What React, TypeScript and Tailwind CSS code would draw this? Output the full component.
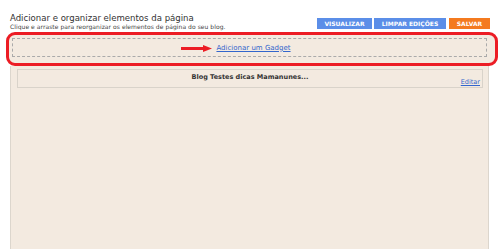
export default function App() {
  return (
    <div className="flex h-[250px] w-[500px] flex-col overflow-hidden bg-white font-['DejaVu_Sans',sans-serif]">
      <div className="flex h-[32px] items-start justify-between">
        <div className="pl-[10px] pt-[12px]">
          <h1 className="font-['DejaVu_Sans_Condensed','DejaVu_Sans',sans-serif] text-[9.5px] leading-[11px] text-[#333]">
            Adicionar e organizar elementos da página
          </h1>
          <p className="text-[6px] leading-[7px] tracking-[0.05px] text-[#444]">
            Clique e arraste para reorganizar os elementos de página do seu blog.
          </p>
        </div>
        <div className="mr-[10px] mt-[18px] flex gap-[2px]">
          <button type="button" className="h-[11px] w-[55px] bg-[#5b8ee8] text-[6px] font-bold leading-[11px] text-white">
            VISUALIZAR
          </button>
          <button type="button" className="h-[11px] w-[72px] bg-[#5b8ee8] text-[6px] font-bold leading-[11px] text-white">
            LIMPAR EDIÇÕES
          </button>
          <button type="button" className="ml-[1px] h-[11px] w-[41px] bg-[#f47a1f] text-[6px] font-bold leading-[11px] text-white">
            SALVAR
          </button>
        </div>
      </div>

      <div className="ml-[6px] h-[34px] w-[492px] rounded-[9px] border-[3px] border-[#ec1c24] bg-[#f3eae0] pl-[3px] pt-[3px]">
        <div className="flex h-[19px] w-[475px] items-center justify-center border border-dashed border-[#aaa]">
          <div className="relative ml-[8px]">
            <svg width="31" height="7" viewBox="0 0 31 7" className="absolute -left-[35px] top-[1px]">
              <rect x="0" y="2" width="23" height="3" fill="#ec1c24" />
              <polygon points="22,0 31,3.5 22,7" fill="#ec1c24" />
            </svg>
            <a href="#" className="block text-[7px] leading-[8px] text-[#3366cc] underline">
              Adicionar um Gadget
            </a>
          </div>
        </div>
      </div>

      <div className="ml-[10px] w-[479px] flex-1 border-x border-[#dcd6cd] bg-[#f3eae0] pl-[6px] pt-[3px]">
        <div className="relative h-[19px] w-[466px] border border-[#d9d3ca]">
          <p className="pt-[3px] text-center text-[6.5px] font-bold leading-[8px] text-[#333]">Blog Testes dicas Mamanunes...</p>
          <a href="#" className="absolute right-[2px] top-[8px] text-[6.5px] leading-[8px] text-[#3366cc] underline">
            Editar
          </a>
        </div>
      </div>
      <div className="h-[1px] bg-white" />
    </div>
  );
}
